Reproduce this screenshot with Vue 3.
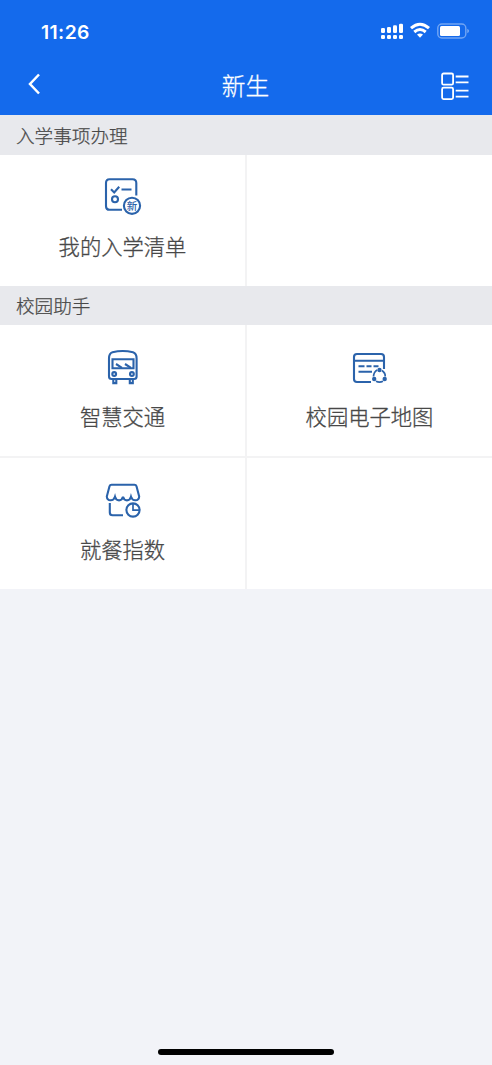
<script setup>
const sections = [
  { title: '入学事项办理', size: 'tall', rows: [[{ label: '我的入学清单', icon: 'list' }, null]] },
  {
    title: '校园助手',
    size: 'short',
    rows: [
      [{ label: '智慧交通', icon: 'bus' }, { label: '校园电子地图', icon: 'map' }],
      [{ label: '就餐指数', icon: 'shop' }, null]
    ]
  }
]
</script>

<template>
  <div class="screen">
    <header class="header">
      <div class="status">
        <span class="time">11:26</span>
        <svg class="signals" width="90" height="18" viewBox="0 0 90 18" fill="#fff">
          <rect x="1" y="6" width="4" height="5" rx="1.3" />
          <rect x="7" y="5" width="4" height="6" rx="1.3" />
          <rect x="13" y="3.3" width="4" height="7.7" rx="1.3" />
          <rect x="19" y="1.7" width="4" height="9.3" rx="1.3" />
          <rect x="1" y="13" width="4" height="4" rx="1.3" />
          <rect x="7" y="13" width="4" height="4" rx="1.3" />
          <rect x="13" y="13" width="4" height="4" rx="1.3" />
          <rect x="19" y="13" width="4" height="4" rx="1.3" />
          <g fill="none" stroke="#fff" stroke-width="3">
            <path d="M31 6.2Q40-1.8 49 6.2" />
            <path d="M34.3 10Q40 5.1 45.7 10" />
          </g>
          <path d="M37 12.6Q40 10.2 43 12.6L40 15.8Z" />
          <rect x="57.8" y="2" width="28" height="14" rx="4" fill="none" stroke="#fff" stroke-opacity=".4" stroke-width="1.4" />
          <rect x="60" y="4" width="20" height="10" rx="1.5" />
          <path d="M87.3 6.8Q89 7.5 89 9T87.3 11.2Z" fill-opacity=".45" />
        </svg>
      </div>
      <div class="nav">
        <svg width="16" height="24" viewBox="0 0 16 24" fill="none" stroke="#fff" stroke-width="2.5">
          <path d="M13 2.5 4 12 13 21.5" />
        </svg>
        <h1>新生</h1>
        <svg width="30" height="30" viewBox="0 0 30 30" fill="none" stroke="#fff" stroke-width="1.8">
          <rect x="2.1" y="2.5" width="11" height="11.2" rx="1.5" />
          <rect x="2.1" y="16.7" width="11" height="11.4" rx="1.5" />
          <path d="M15.7 5.5H28.5M15.7 11.3H28.5M15.7 19.6H28.5M15.7 25.6H28.5" />
        </svg>
      </div>
    </header>

    <section v-for="section in sections" :key="section.title">
      <h2 :class="section.size">{{ section.title }}</h2>
      <div class="grid">
        <div v-for="(row, r) in section.rows" :key="r" class="row">
          <div v-for="(item, c) in row" :key="c" class="cell">
            <template v-if="item">
              <svg v-if="item.icon === 'list'" class="icon" viewBox="7 6 41 40">
                <path d="M27 39.8H14.5Q11 39.8 11 36.3V13Q11 9.3 14.5 9.3H37.5Q41.3 9.3 41.3 13V25.5" />
                <path d="m16 19.3 3.2 3.2 5-5.8M26.5 19.5h10" />
                <circle cx="20" cy="29.3" r="3" />
                <circle cx="37" cy="35.8" r="8.1" />
                <text x="37" y="39.7" text-anchor="middle">新</text>
              </svg>
              <svg v-else-if="item.icon === 'bus'" class="icon" viewBox="0 0 41 40">
                <path d="M7 12.5Q7 7.2 10.5 6.2 20.7 3.8 31 6.2 34.6 7.2 34.6 12.5V30.5Q34.6 33 32 33H9.6Q7 33 7 30.5Z" />
                <path d="M10.5 13.3H31.5V22.3H10.5Z" />
                <path d="m14 18 6 3.8M23 18l6 3.8" />
                <circle cx="12.2" cy="28" r="1.9" />
                <circle cx="29.9" cy="28" r="1.9" />
                <path d="M11.3 33.5v3.6h3v-3.6M27.8 33.5v3.6h3v-3.6" />
              </svg>
              <svg v-else-if="item.icon === 'map'" class="icon" viewBox="9 6 41 40">
                <path d="M31 42H17Q14 42 14 39V17Q14 14 17 14H41Q44 14 44 17V29M14 20.7H44" />
                <path d="M18.5 26.3h6M26.5 26.3h5M33.5 26.3h5M18.5 31.7H32" />
                <path stroke-width="1.7" d="M37.2 30Q33.7 32 33.5 36.5M42 30.5Q45.5 33 45.2 36.5M36 41.2Q39.4 43 43 41.2" />
                <g class="dots">
                  <circle cx="39.5" cy="30" r="2.2" />
                  <circle cx="34.2" cy="39" r="2.2" />
                  <circle cx="44.7" cy="39" r="2.2" />
                </g>
              </svg>
              <svg v-else class="icon" viewBox="7 4 41 40">
                <path d="M16.5 9.7H39.5Q41 9.7 41.5 11.3L44.2 21.5C43.8 26.5 37.5 26.5 36 21.8 34.7 26.5 29.2 26.5 28 21.8 26.8 26.5 21.3 26.5 20 21.8 18.5 26.5 12.2 26.5 11.8 21.5L14.5 11.3Q15 9.7 16.5 9.7Z" />
                <path d="M14.8 28V37.5Q14.8 40.3 17.6 40.3H28" />
                <circle cx="38" cy="35" r="6.6" />
                <path class="thin" d="M38 28.8V35.2H44.3" />
              </svg>
              <span class="label">{{ item.label }}</span>
            </template>
          </div>
        </div>
      </div>
    </section>

    <div class="spacer"></div>
    <div class="home"></div>
  </div>
</template>

<style>
body {
  margin: 0;
}
</style>

<style scoped>
.screen {
  display: flex;
  flex-direction: column;
  height: 1065px;
  background: #f2f3f8;
  color: #484848;
  font-family: "Liberation Sans", "Noto Sans CJK SC", sans-serif;
}
.header {
  height: 115px;
  background: #146aec;
  color: #fff;
}
.status {
  display: flex;
  justify-content: space-between;
  align-items: center;
  height: 62px;
  padding: 0 22px 0 41px;
  box-sizing: border-box;
}
.time {
  padding-top: 1px;
  font: 600 19.3px/24px Inter, sans-serif;
  letter-spacing: 0.4px;
}
.signals {
  display: block;
}
.nav {
  display: flex;
  justify-content: space-between;
  align-items: center;
  height: 48px;
  padding: 0 22px 0 26px;
}
.nav svg:first-child {
  width: 16px;
  margin: 0 9px 4px 0;
}
h1 {
  margin: 0 0 2px;
  font: 300 23.7px/30px "Noto Sans CJK SC", sans-serif;
  -webkit-text-stroke: 0.3px currentColor;
}
h2 {
  height: 40px;
  margin: 0;
  padding-left: 16px;
  background: #e8e9ed;
  font: 300 18.6px/39px "Noto Sans CJK SC", sans-serif;
  -webkit-text-stroke: 0.25px currentColor;
}
h2.short {
  height: 39px;
  line-height: 37px;
}
.grid {
  display: flex;
  flex-direction: column;
  gap: 2px;
  background: #f3f3f4;
}
.row {
  display: grid;
  grid-template-columns: 245px 245px;
  gap: 2px;
}
.cell {
  display: flex;
  flex-direction: column;
  align-items: center;
  height: 131px;
  padding-top: 21px;
  box-sizing: border-box;
  background: #fff;
}
.icon {
  width: 41px;
  height: 40px;
  flex: none;
  fill: none;
  stroke: #2b63ab;
  stroke-width: 2.1;
}
.icon text {
  fill: #2b63ab;
  stroke: none;
  font: 500 10.5px "Noto Sans CJK SC", sans-serif;
}
.thin {
  stroke-width: 1.7;
}
.dots {
  fill: #2b63ab;
  stroke: none;
}
.label {
  margin-top: 14px;
  font: 300 21.3px/32px "Noto Sans CJK SC", sans-serif;
  -webkit-text-stroke: 0.3px currentColor;
}
.spacer {
  flex: 1;
}
.home {
  width: 176px;
  height: 6px;
  margin: 0 auto 10px;
  border-radius: 3px;
  background: #000;
}
</style>
